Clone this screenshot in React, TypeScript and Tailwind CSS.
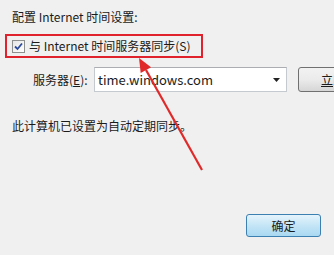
import React from 'react';

const font = { fontFamily: '"Noto Sans CJK SC", "Microsoft YaHei", sans-serif' };

export default function App() {
  return (
    <div
      className="relative w-[334px] h-[255px] overflow-hidden bg-[#f0f0f0] text-[12px] leading-[16px] text-[#1b1b1b]"
      style={font}
    >
      <div className="flex flex-col pl-[12px] pt-[9px]">
        {/* heading */}
        <div>配置 Internet 时间设置:</div>

        {/* sync checkbox, boxed in red */}
        <div className="mt-[9px] -ml-[7px] w-[198px] h-[24px] border-2 border-[#e0222c] flex items-center pl-[5px]">
          <div className="w-[13px] h-[13px] border border-[#8e8f8f] bg-gradient-to-br from-[#e6e6e6] to-white flex items-center justify-center">
            <svg width="9" height="9" viewBox="0 0 9 9">
              <path d="M1 4.5 L3.5 7 L8 1.5" fill="none" stroke="#2c4b9e" strokeWidth="1.8" />
            </svg>
          </div>
          <span className="ml-[4px] whitespace-nowrap">与 Internet 时间服务器同步(S)</span>
        </div>

        {/* server row */}
        <div className="mt-[9px] flex items-center">
          <span className="ml-[21px] w-[61px] shrink-0 whitespace-nowrap">
            服务器(<span className="underline">E</span>):
          </span>
          <div className="ml-[0px] w-[193px] h-[25px] shrink-0 bg-white border border-[#c5c9d0] border-t-[#abadb3] flex items-center pl-[3px] pr-[6px]">
            <span className="text-[13px]">time.windows.com</span>
            <svg className="ml-auto" width="7" height="4" viewBox="0 0 7 4">
              <path d="M0 0 H7 L3.5 4 Z" fill="#222" />
            </svg>
          </div>
          <div className="ml-[11px] w-[90px] h-[25px] shrink-0 rounded-[3px] border border-[#707070] bg-gradient-to-b from-[#f2f2f2] via-[#ebebeb] to-[#d6d6d6] flex items-center pl-[22px]">
            <span className="whitespace-nowrap">
              <span className="underline">立</span>即更新(U)
            </span>
          </div>
        </div>

        {/* status */}
        <div className="mt-[26px]">此计算机已设置为自动定期同步。</div>

        {/* ok button */}
        <div className="mt-[80px] ml-[234px] w-[75px] h-[23px] rounded-[3px] border border-[#3c7fb1] bg-gradient-to-b from-[#e5f4fc] via-[#c4e5f6] to-[#a9d9f2] flex items-center justify-center">
          确定
        </div>
      </div>

      {/* red annotation arrow */}
      <svg className="absolute left-0 top-0 pointer-events-none" width="334" height="255">
        <line x1="202" y1="170" x2="146" y2="70" stroke="#e02a2a" strokeWidth="2.2" />
        <path d="M139 58 L151.1 67.3 L140.7 73.1 Z" fill="#e02a2a" />
      </svg>
    </div>
  );
}
